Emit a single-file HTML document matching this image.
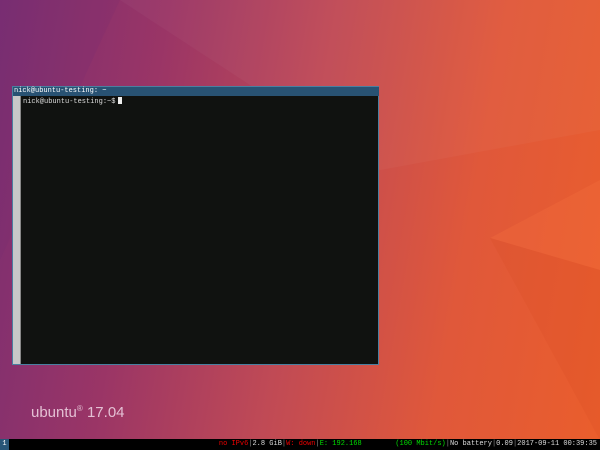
<!DOCTYPE html>
<html><head><style>
body{margin:0;width:600px;height:450px;overflow:hidden;position:relative;font-family:"Liberation Mono",monospace;
background:linear-gradient(100deg,#7a2e72 0%,#9a3566 25%,#c04a55 50%,#e0583a 75%,#ea5e2c 100%);}
svg.bg{position:absolute;left:0;top:0}
.win{position:absolute;left:12px;top:86px;width:367px;height:279px;background:#101210;border:1px solid #4a7fa0;box-sizing:border-box}
.title{position:absolute;left:0;top:0;width:100%;height:9px;background:#285273;color:#fff;font-size:7px;line-height:9px;padding-left:1px}
.sb{position:absolute;left:0;top:9px;width:7px;bottom:0;background:#c8c8c8;border-right:1px solid #888}
.txt{position:absolute;left:10px;top:10px;color:#ddd;font-size:7px;line-height:9px}
.cur{display:inline-block;width:4px;height:7px;background:#eee;vertical-align:-1px;margin-left:3px}
.logo{position:absolute;left:31px;top:404px;color:#e4c0d4;font-family:"Liberation Sans",sans-serif;font-size:15px}
.bar{position:absolute;left:0;top:439px;width:600px;height:11px;background:#000;font-size:7px;line-height:11px;color:#ddd}
.ws{position:absolute;left:0;top:0;width:9px;height:11px;background:#285577;color:#fff;text-align:center}
.st{position:absolute;right:3px;top:0;white-space:pre}
.r{color:#e00}.g{color:#0d0}.s{color:#888}
</style></head><body>
<svg class="bg" width="600" height="450">
<polygon points="120,0 600,0 600,130 380,170" fill="#ffffff" opacity="0.03"/>
<polygon points="490,238 600,180 600,270" fill="#f47040" opacity="0.3"/>
<polygon points="490,238 600,270 600,440" fill="#d84a25" opacity="0.2"/>
<polygon points="0,0 120,0 0,260" fill="#6a2870" opacity="0.12"/>
</svg>
<div class="win"><div class="title">nick@ubuntu-testing: ~</div><div class="sb"></div>
<div class="txt">nick@ubuntu-testing:~$<span class="cur"></span></div></div>
<div class="logo">ubuntu<sup style="font-size:8px">®</sup> 17.04</div>
<div class="bar"><div class="ws">1</div>
<div class="st"><span class="r">no IPv6</span><span class="s">|</span>2.8 GiB<span class="s">|</span><span class="r">W: down</span><span class="s">|</span><span class="g">E: 192.168        (100 Mbit/s)</span><span class="s">|</span>No battery<span class="s">|</span>0.09<span class="s">|</span>2017-09-11 00:39:35</div></div>
</body></html>
